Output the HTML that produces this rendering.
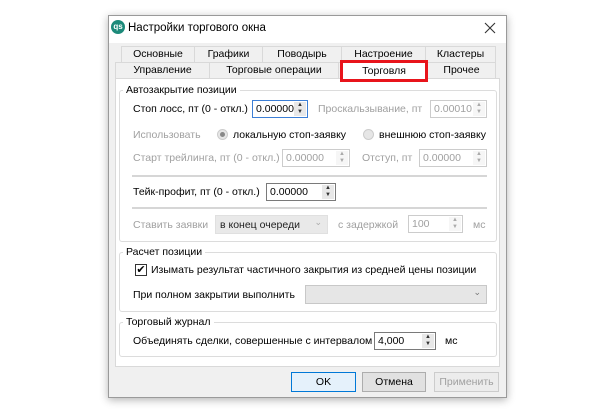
<!DOCTYPE html><html><head><meta charset="utf-8"><style>
*{box-sizing:border-box;margin:0;padding:0}
body{width:600px;height:416px;background:#fff;position:relative;overflow:hidden;font-family:"Liberation Sans","DejaVu Sans",sans-serif;font-size:10.5px;color:#000}
.a{position:absolute;white-space:nowrap}
.dlg{left:108px;top:15px;width:399px;height:383px;background:#f0f0f0;border:1px solid #9a9a9a;box-shadow:0 2px 8px rgba(0,0,0,.3)}
.tab{position:absolute;border:1px solid #d9d9d9;background:#f0f0f0;text-align:center;font-size:10.5px;line-height:15px}
.grp{position:absolute;border:1px solid #dcdcdc;border-radius:3px}
.gl{position:absolute;background:#fff;padding:0 3px;font-size:10.5px}
.inp{position:absolute;background:#fff;border:1px solid #7a7a7a;height:18px;padding:2px 3px;font-size:10.5px}
.dis{border-color:#ccc;color:#a0a0a0}
.g{color:#a0a0a0}
.sp{position:absolute;right:1px;top:1px;width:12px;height:14px;background:#e8e8e8;font-size:6px;line-height:7px;text-align:center;color:#333}
.btn{position:absolute;height:20px;border:1px solid #adadad;background:#e1e1e1;text-align:center;line-height:18px}
</style></head><body>
<div class="a dlg"></div>
<div class="a" style="left:109px;top:16px;width:397px;height:27px;background:#fff"></div>
<div class="a" style="left:111px;top:20px;width:14px;height:14px;border-radius:7px;background:#1c8a7a;color:#fff;font-size:8px;font-weight:bold;line-height:14px;text-align:center">qs</div>
<div class="a" style="left:128px;top:22px;font-size:11.5px">Настройки торгового окна</div>
<svg class="a" style="left:484px;top:22px" width="12" height="12"><path d="M1 1L11 11M11 1L1 11" stroke="#333" stroke-width="1.1"/></svg>
<div class="tab" style="left:121px;top:46px;width:74px;height:17px">Основные</div>
<div class="tab" style="left:194px;top:46px;width:69px;height:17px">Графики</div>
<div class="tab" style="left:262px;top:46px;width:80px;height:17px">Поводырь</div>
<div class="tab" style="left:341px;top:46px;width:85px;height:17px">Настроение</div>
<div class="tab" style="left:425px;top:46px;width:71px;height:17px">Кластеры</div>
<div class="tab" style="left:115px;top:62px;width:95px;height:17px">Управление</div>
<div class="tab" style="left:209px;top:62px;width:130px;height:17px">Торговые операции</div>
<div class="tab" style="left:427px;top:62px;width:69px;height:17px">Прочее</div>
<div class="a" style="left:115px;top:78px;width:385px;height:289px;background:#fff;border:1px solid #d9d9d9"></div>
<div class="tab" style="left:340px;top:61px;width:88px;height:19px;background:#fff;border-bottom:none;line-height:19px">Торговля</div>
<div class="a" style="left:340px;top:60px;width:88px;height:22px;border:3px solid #e8141b"></div>
<div class="grp" style="left:119px;top:90px;width:378px;height:152px"></div>
<div class="gl" style="left:123px;top:84px">Автозакрытие позиции</div>
<div class="a" style="left:133px;top:103px">Стоп лосс, пт (0 - откл.)</div>
<div class="inp" style="left:252px;top:100px;width:56px;border-color:#3c7fd6">0.00000<div class="sp">▲<br>▼</div></div>
<div class="a g" style="left:318px;top:103px">Проскальзывание, пт</div>
<div class="inp dis" style="left:430px;top:100px;width:57px">0.00010<div class="sp" style="background:#f6f6f6;color:#aaa">▲<br>▼</div></div>
<div class="a g" style="left:133px;top:129px">Использовать</div>
<div class="a" style="left:217px;top:129px;width:11px;height:11px;border-radius:6px;background:#e6e6e6;border:1px solid #ccc"><div style="position:absolute;left:2px;top:2px;width:5px;height:5px;border-radius:3px;background:#888"></div></div>
<div class="a" style="left:233px;top:129px">локальную стоп-заявку</div>
<div class="a" style="left:363px;top:129px;width:11px;height:11px;border-radius:6px;background:#e6e6e6;border:1px solid #ccc"></div>
<div class="a" style="left:379px;top:129px">внешнюю стоп-заявку</div>
<div class="a g" style="left:133px;top:152px">Старт трейлинга, пт (0 - откл.)</div>
<div class="inp dis" style="left:282px;top:149px;width:68px">0.00000<div class="sp" style="background:#f6f6f6;color:#aaa">▲<br>▼</div></div>
<div class="a g" style="left:362px;top:152px">Отступ, пт</div>
<div class="inp dis" style="left:419px;top:149px;width:68px">0.00000<div class="sp" style="background:#f6f6f6;color:#aaa">▲<br>▼</div></div>
<div class="a" style="left:132px;top:175px;width:355px;height:2px;background:#d6d6d6"></div>
<div class="a" style="left:133px;top:186px">Тейк-профит, пт (0 - откл.)</div>
<div class="inp" style="left:266px;top:183px;width:70px">0.00000<div class="sp">▲<br>▼</div></div>
<div class="a" style="left:132px;top:207px;width:355px;height:2px;background:#d6d6d6"></div>
<div class="a g" style="left:133px;top:219px">Ставить заявки</div>
<div class="a" style="left:215px;top:215px;width:113px;height:19px;background:#e9e9e9;border:1px solid #e0e0e0;padding:3px 4px;color:#222">в конец очереди<span style="position:absolute;right:5px;top:1px;color:#aaa;font-size:9px">⌄</span></div>
<div class="a g" style="left:338px;top:219px">с задержкой</div>
<div class="inp dis" style="left:408px;top:215px;width:55px">100<div class="sp" style="background:#f6f6f6;color:#aaa">▲<br>▼</div></div>
<div class="a g" style="left:473px;top:219px">мс</div>
<div class="grp" style="left:119px;top:252px;width:378px;height:60px"></div>
<div class="gl" style="left:123px;top:246px">Расчет позиции</div>
<div class="a" style="left:135px;top:264px;width:12px;height:12px;border:1px solid #333;background:#fff;font-size:11px;line-height:10px;text-align:center">✔</div>
<div class="a" style="left:151px;top:264px">Изымать результат частичного закрытия из средней цены позиции</div>
<div class="a" style="left:133px;top:289px">При полном закрытии выполнить</div>
<div class="a" style="left:305px;top:285px;width:182px;height:19px;background:#e6e6e6;border:1px solid #c8c8c8"><span style="position:absolute;right:5px;top:1px;color:#777;font-size:9px">⌄</span></div>
<div class="grp" style="left:119px;top:322px;width:378px;height:35px"></div>
<div class="gl" style="left:123px;top:316px">Торговый журнал</div>
<div class="a" style="left:133px;top:335px">Объединять сделки, совершенные с интервалом</div>
<div class="inp" style="left:374px;top:332px;width:62px">4,000<div class="sp">▲<br>▼</div></div>
<div class="a" style="left:445px;top:335px">мс</div>
<div class="btn" style="left:291px;top:372px;width:65px;border:1px solid #0078d7;background:#e5f1fb">OK</div>
<div class="btn" style="left:362px;top:372px;width:64px">Отмена</div>
<div class="btn" style="left:434px;top:372px;width:65px;color:#a0a0a0;background:#ececec;border-color:#ccc">Применить</div>
</body></html>
